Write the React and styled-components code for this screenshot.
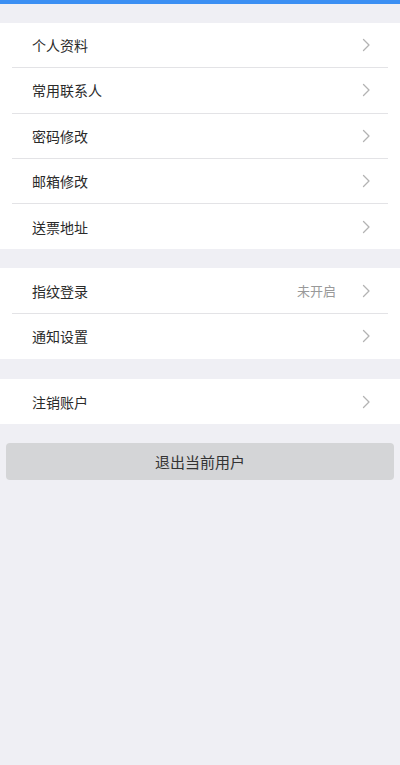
import React from "react";
import styled, { createGlobalStyle } from "styled-components";

const Global = createGlobalStyle`
  html, body { margin: 0; padding: 0; background: #efeff4; }
  body { font-family: "Noto Sans CJK SC", "Noto Sans", sans-serif; }
  * { box-sizing: border-box; }
`;

const Page = styled.div`
  min-height: 765px;
  background: #efeff4;
  display: flex;
  flex-direction: column;
`;

const TopBar = styled.div`
  height: 4px;
  background: #3b8ff3;
`;

const Group = styled.div`
  background: #fff;
  margin-top: ${(p) => p.$gap}px;
  padding: 0 12px;
`;

const Row = styled.div`
  height: 45.3px;
  display: flex;
  align-items: center;
  padding: 0 17px 0 20px;
  border-bottom: 1px solid #e3e3e6;
  &:last-child { border-bottom: none; }
`;

const Label = styled.span`
  flex: 1;
  font-size: 14px;
  color: #2a2a2a;
`;

const Value = styled.span`
  font-size: 13px;
  color: #999;
  margin-right: 26px;
`;

const Chevron = () => (
  <svg width="9" height="14" viewBox="0 0 9 14" fill="none">
    <path d="M1.5 1.5L7 7L1.5 12.5" stroke="#b3b3b3" strokeWidth="1.3" strokeLinecap="round" strokeLinejoin="round" />
  </svg>
);

const ExitButton = styled.button`
  margin: 19px 6px 0;
  height: 37px;
  border: none;
  border-radius: 4px;
  background: #d4d5d7;
  color: #333;
  font-family: inherit;
  font-size: 15px;
  display: flex;
  align-items: center;
  justify-content: center;
`;

const groups = [
  { gap: 19, items: [{ label: "个人资料" }, { label: "常用联系人" }, { label: "密码修改" }, { label: "邮箱修改" }, { label: "送票地址" }] },
  { gap: 19, items: [{ label: "指纹登录", value: "未开启" }, { label: "通知设置" }] },
  { gap: 20, items: [{ label: "注销账户" }] },
];

export default function App() {
  return (
    <Page>
      <Global />
      <TopBar />
      {groups.map((g, i) => (
        <Group key={i} $gap={g.gap}>
          {g.items.map((it) => (
            <Row key={it.label}>
              <Label>{it.label}</Label>
              {it.value && <Value>{it.value}</Value>}
              <Chevron />
            </Row>
          ))}
        </Group>
      ))}
      <ExitButton>退出当前用户</ExitButton>
    </Page>
  );
}
